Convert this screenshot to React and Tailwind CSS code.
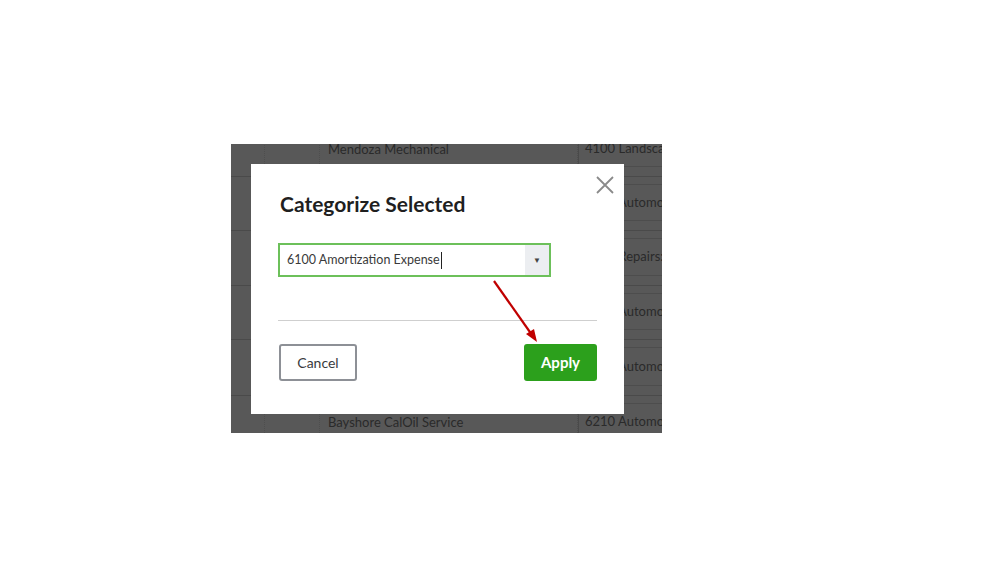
import React from "react";

const rows = [
  { h: "h-[54px]", name: "Mendoza Mechanical", acct: "4100 Landscaping" },
  { h: "h-[54px]", name: "Cal Gas & Electric", acct: "6210 Automobile" },
  { h: "h-[55px]", name: "Bob's Burger Joint", acct: "7400 Repairs:Equipment" },
  { h: "h-[54px]", name: "Chin's Gas and Oil", acct: "6210 Automobile" },
  { h: "h-[56px]", name: "Squeaky Kleen Car Wash", acct: "6210 Automobile" },
  { h: "h-[54px]", name: "Bayshore CalOil Service", acct: "6210 Automobile" },
];

function TableBehind() {
  return (
    <div className="-mt-[22px] flex flex-col">
      {rows.map((r, i) => (
        <div key={i} className={`flex ${r.h} border-t border-[#4a4a4a]`}>
          {/* checkbox col */}
          <div className="w-[34px] shrink-0 border-r border-dotted border-[#4e4e4e]" />
          {/* date col */}
          <div className="w-[55px] shrink-0 border-r border-dotted border-[#4e4e4e]" />
          {/* payee */}
          <div className="flex w-[258px] shrink-0 items-center border-r border-dotted border-[#4e4e4e] pl-[8px] text-[13px] text-[#2a2a2a]">
            {r.name}
          </div>
          {/* category */}
          <div className="flex min-w-0 flex-1 flex-col overflow-hidden border-l border-[#4a4a4a] pl-[6px] text-[13px] text-[#2a2a2a]">
            <div className="h-[8px] border-b border-[#4d4d4d]" />
            <div className="flex flex-1 items-center whitespace-nowrap">
              {r.acct}
            </div>
            <div className="h-[10px] border-t border-[#4d4d4d]" />
          </div>
        </div>
      ))}
    </div>
  );
}

function CloseIcon() {
  return (
    <svg width="18" height="18" viewBox="0 0 18 18" className="block">
      <path d="M1 1 L17 17 M17 1 L1 17" stroke="#8a8a8a" strokeWidth="1.8" fill="none" />
    </svg>
  );
}

export default function App() {
  return (
    <div className="h-[562px] w-[999px] bg-white font-['Lato',sans-serif] pt-[144px] pl-[231px]">
      <div className="relative h-[289px] w-[431px] overflow-hidden bg-[#585858]">
        <TableBehind />

        {/* Modal */}
        <div className="absolute left-[20px] top-[20px] flex h-[250px] w-[373px] flex-col bg-white pl-[27px] pr-[27px]">
          <div className="absolute right-[10px] top-[12px]">
            <CloseIcon />
          </div>

          <h2 className="ml-[2px] mt-[25px] text-[21px] font-bold leading-[30px] text-[#1f1f1f]">
            Categorize Selected
          </h2>

          {/* Category select */}
          <div className="mt-[24px] flex h-[34px] w-[273px] items-stretch border-2 border-[#6cc05a] bg-white">
            <div className="flex flex-1 items-center pl-[7px] text-[12.5px] text-[#3a3a3a]">
              6100 Amortization Expense
              <span className="ml-[1px] inline-block h-[17px] w-[1.5px] bg-[#222]" />
            </div>
            <div className="flex w-[24px] items-center justify-center bg-[#eceef1] text-[8px] text-[#444]">
              ▼
            </div>
          </div>

          <div className="mt-[43px] h-px w-[319px] bg-[#cfcfcf]" />

          <div className="mt-[23px] flex w-[319px] items-center justify-between">
            <button className="ml-[1px] flex h-[37px] w-[78px] items-center justify-center rounded-[3px] border-2 border-[#8d9096] text-[14px] text-[#393a3d]">
              Cancel
            </button>
            <button className="flex h-[37px] w-[73px] items-center justify-center rounded-[3px] bg-[#2ca01c] text-[15px] font-bold text-white">
              Apply
            </button>
          </div>
        </div>

        {/* Red annotation arrow */}
        <svg
          className="absolute left-0 top-0"
          width="431"
          height="289"
          viewBox="0 0 431 289"
        >
          <line x1="263" y1="137" x2="301" y2="191" stroke="#c00000" strokeWidth="2.2" />
          <polygon points="306,198 295,190 303,185" fill="#c00000" />
        </svg>
      </div>
    </div>
  );
}
